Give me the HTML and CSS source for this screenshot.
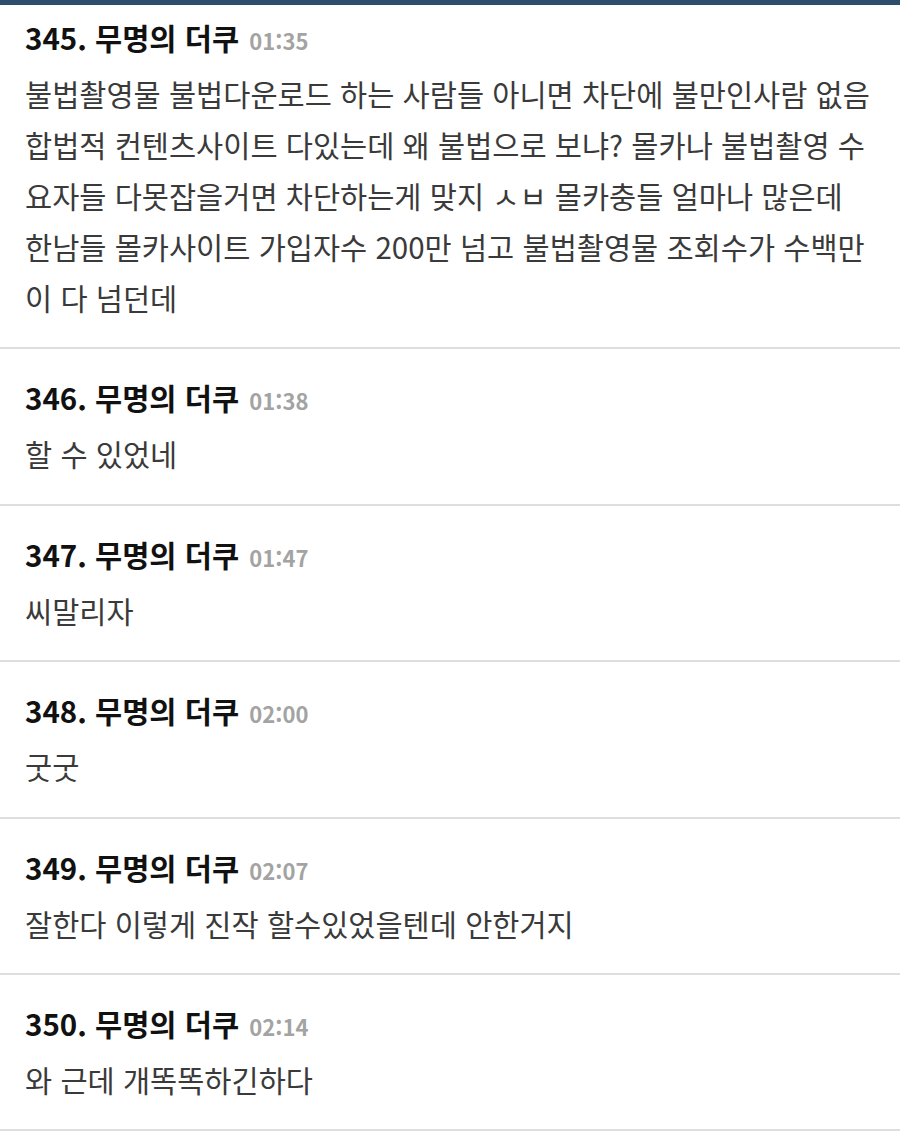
FILE: index.html
```html
<!DOCTYPE html>
<html lang="ko">

<head>
    <meta charset="UTF-8">
    <meta name="viewport" content="width=device-width, initial-scale=1.0">
    <title>댓글</title>
    <link rel="stylesheet" href="styles.css">
</head>

<body>
    <div class="topbar"></div>

    <ul class="comments">
        <li class="comment">
            <div class="comment-head">
                <span class="author">345. 무명의 더쿠</span>
                <span class="time">01:35</span>
            </div>
            <p class="comment-body">불법촬영물 불법다운로드 하는 사람들 아니면 차단에 불만인사람 없음 합법적 컨텐츠사이트 다있는데 왜 불법으로 보냐? 몰카나 불법촬영 수요자들 다못잡을거면 차단하는게 맞지 ㅅㅂ 몰카충들 얼마나 많은데 한남들 몰카사이트 가입자수 200만 넘고 불법촬영물 조회수가 수백만이 다 넘던데</p>
        </li>
        <li class="comment">
            <div class="comment-head">
                <span class="author">346. 무명의 더쿠</span>
                <span class="time">01:38</span>
            </div>
            <p class="comment-body">할 수 있었네</p>
        </li>
        <li class="comment">
            <div class="comment-head">
                <span class="author">347. 무명의 더쿠</span>
                <span class="time">01:47</span>
            </div>
            <p class="comment-body">씨말리자</p>
        </li>
        <li class="comment">
            <div class="comment-head">
                <span class="author">348. 무명의 더쿠</span>
                <span class="time">02:00</span>
            </div>
            <p class="comment-body">굿굿</p>
        </li>
        <li class="comment">
            <div class="comment-head">
                <span class="author">349. 무명의 더쿠</span>
                <span class="time">02:07</span>
            </div>
            <p class="comment-body">잘한다 이렇게 진작 할수있었을텐데 안한거지</p>
        </li>
        <li class="comment">
            <div class="comment-head">
                <span class="author">350. 무명의 더쿠</span>
                <span class="time">02:14</span>
            </div>
            <p class="comment-body">와 근데 개똑똑하긴하다</p>
        </li>
    </ul>
</body>

</html>
```

FILE: styles.css
```css
body {
    margin: 0;
    background-color: #fff;
    font-family: "Noto Sans CJK KR", sans-serif;
    color: #333;
}

.topbar {
    height: 5px;
    background: #2c4e6c;
}

.comments {
    list-style: none;
    margin: 0;
    padding: 0;
}

.comment {
    padding: 28px 27px 24.4px 25px;
    border-bottom: 2px solid #dedede;
}

.comment:first-child {
    padding-top: 12px;
}

.comment-head {
    font-size: 29.5px;
    line-height: 40px;
    white-space: nowrap;
}

.author {
    font-weight: bold;
    color: #111;
}

.time {
    margin-left: 2px;
    font-size: 22px;
    line-height: 1;
    font-weight: bold;
    color: #a3a3a3;
}

.comment-body {
    margin: 11px 0 0;
    font-size: 29.5px;
    line-height: 51px;
    color: #3a3a3a;
}
```
